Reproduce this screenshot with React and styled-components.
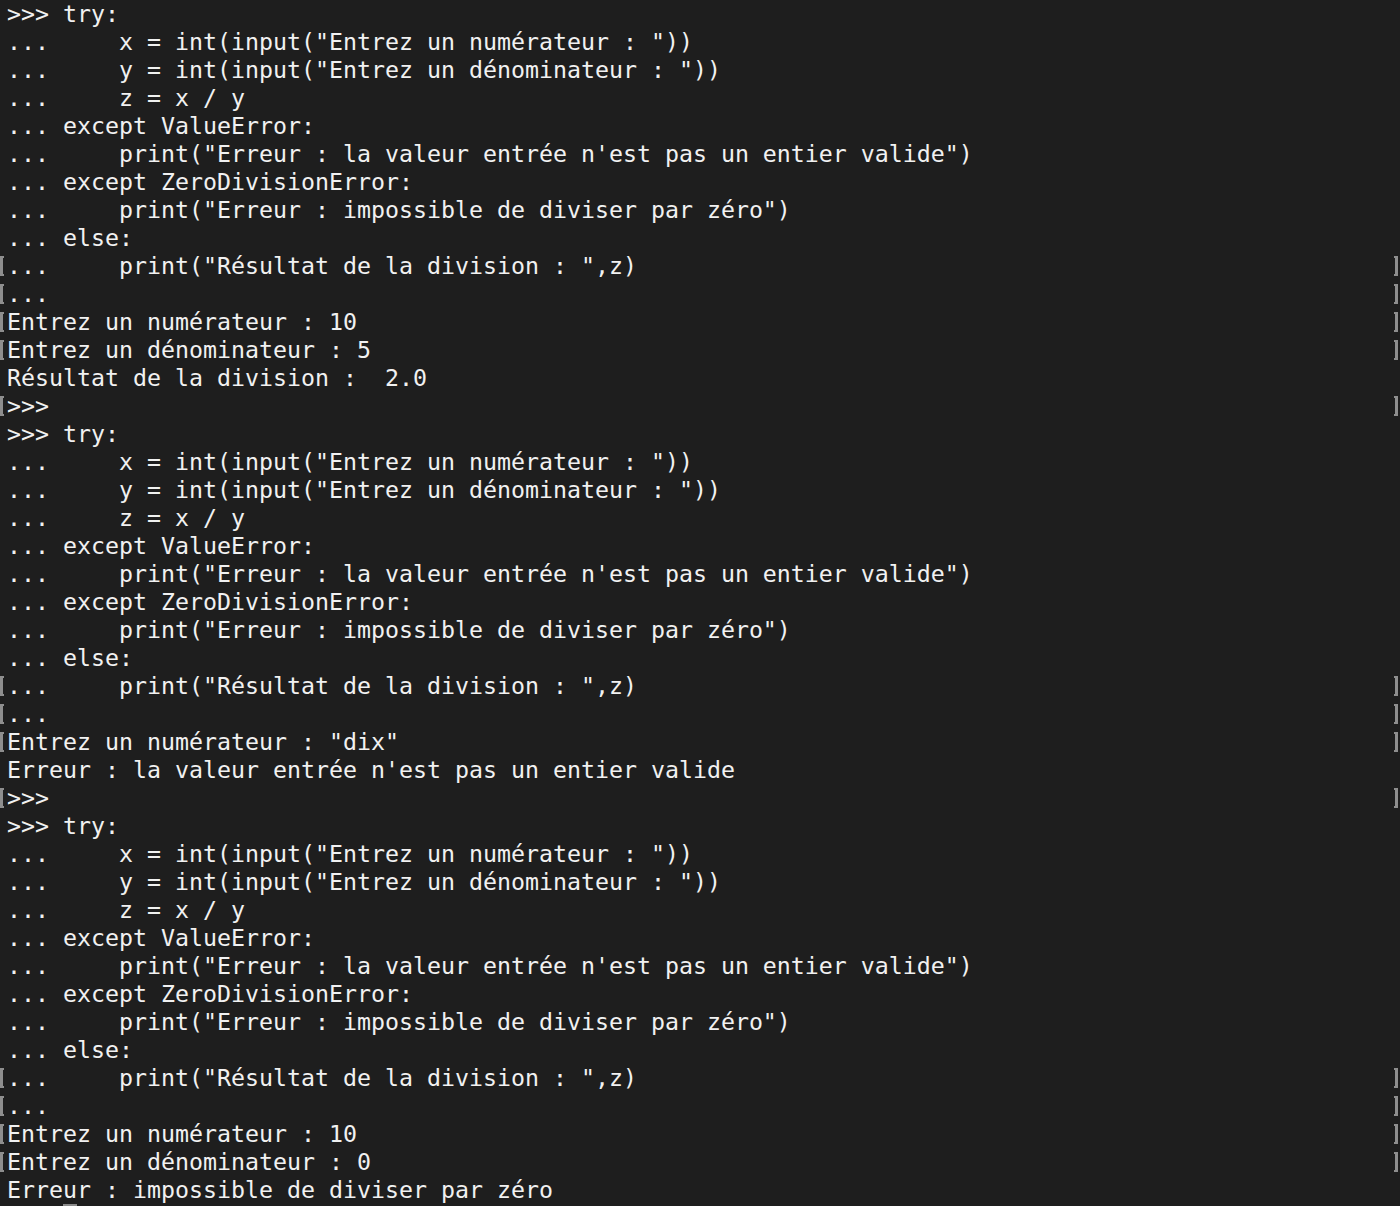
import React from 'react';
import styled, { createGlobalStyle } from 'styled-components';

const GlobalStyle = createGlobalStyle`
  html, body {
    margin: 0;
    padding: 0;
    background: #1e1e1e;
  }
`;

const Terminal = styled.main`
  width: 1400px;
  height: 1206px;
  overflow: hidden;
  background: #1e1e1e;
  color: #f1f1f1;
  font-family: "DejaVu Sans Mono", "Liberation Mono", monospace;
  font-size: 23.25px;
  display: flex;
  flex-direction: column;
`;

const Line = styled.div`
  height: 28px;
  line-height: 28px;
  display: flex;
  align-items: flex-start;
  white-space: pre;
`;

const Gutter = styled.span`
  width: 7px;
  flex: none;
  display: flex;
  padding-top: 4px;
`;

const Bracket = styled.span`
  display: block;
  width: 4px;
  height: 20px;
  box-sizing: border-box;
  border: 2px solid #8e8e8e;
  ${(p) => (p.$side === 'left'
    ? 'border-right: none; border-left-width: 3px;'
    : 'border-left: none; border-right-width: 3px;')}
`;

const RightMark = styled.span`
  margin-left: auto;
  margin-right: 2px;
  padding-top: 4px;
`;

const Text = styled.span``;

const Cursor = styled.span`
  display: inline-block;
  width: 14px;
  height: 28px;
  background: #8a8a8a;
`;

const tryBlock = [
  '>>> try:',
  '...     x = int(input("Entrez un numérateur : "))',
  '...     y = int(input("Entrez un dénominateur : "))',
  '...     z = x / y',
  '... except ValueError:',
  '...     print("Erreur : la valeur entrée n\'est pas un entier valide")',
  '... except ZeroDivisionError:',
  '...     print("Erreur : impossible de diviser par zéro")',
  '... else:',
  ['...     print("Résultat de la division : ",z)', true],
  ['...', true],
];

const lines = [
  ...tryBlock,
  ['Entrez un numérateur : 10', true],
  ['Entrez un dénominateur : 5', true],
  'Résultat de la division :  2.0',
  ['>>>', true],
  ...tryBlock,
  ['Entrez un numérateur : "dix"', true],
  "Erreur : la valeur entrée n'est pas un entier valide",
  ['>>>', true],
  ...tryBlock,
  ['Entrez un numérateur : 10', true],
  ['Entrez un dénominateur : 0', true],
  'Erreur : impossible de diviser par zéro',
];

function App() {
  return (
    <>
      <GlobalStyle />
      <Terminal>
        {lines.map((l, i) => {
          const text = Array.isArray(l) ? l[0] : l;
          const marked = Array.isArray(l) && l[1];
          return (
            <Line key={i}>
              <Gutter>{marked && <Bracket $side="left" />}</Gutter>
              <Text>{text}</Text>
              {marked && (
                <RightMark>
                  <Bracket $side="right" />
                </RightMark>
              )}
            </Line>
          );
        })}
        <Line>
          <Gutter />
          <Text>{'    '}</Text>
          <Cursor />
        </Line>
      </Terminal>
    </>
  );
}

export default App;
